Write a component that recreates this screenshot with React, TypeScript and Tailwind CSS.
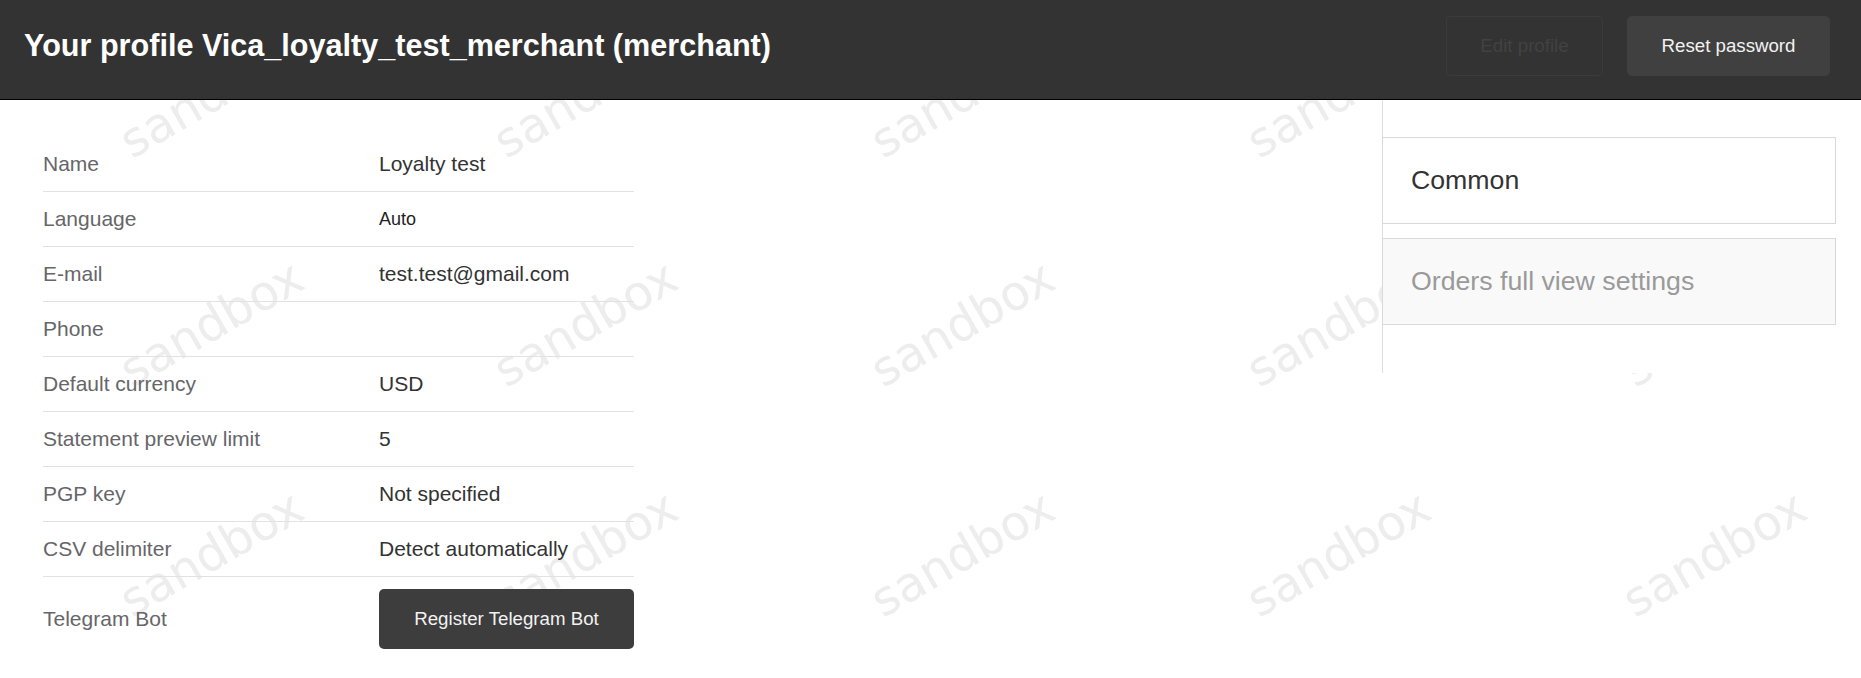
const rows: { label: string; value: string; small?: boolean }[] = [
  { label: "Name", value: "Loyalty test" },
  { label: "Language", value: "Auto", small: true },
  { label: "E-mail", value: "test.test@gmail.com" },
  { label: "Phone", value: "" },
  { label: "Default currency", value: "USD" },
  { label: "Statement preview limit", value: "5" },
  { label: "PGP key", value: "Not specified" },
  { label: "CSV delimiter", value: "Detect automatically" },
];

const markCols = [211, 585, 962, 1338, 1714];
const markRows = [94, 323, 553];

const Watermark = () => (
  <div className="pointer-events-none absolute inset-0 z-0 overflow-hidden">
    {markRows.map((y) =>
      markCols.map((x) => (
        <span
          key={`${x}-${y}`}
          className="absolute -translate-x-1/2 -translate-y-1/2 -rotate-30 whitespace-nowrap font-['DejaVu_Sans',sans-serif] text-[48px] leading-none text-[#ededed] select-none"
          style={{ left: x, top: y }}
        >
          sandbox
        </span>
      ))
    )}
  </div>
);

const Header = () => (
  <header className="relative z-10 flex h-[100px] items-center justify-between border-b border-black bg-[#333333] pb-[7px] pl-[24px] pr-[31px]">
    <h1 className="text-[30.6px] font-bold text-white">
      Your profile Vica_loyalty_test_merchant (merchant)
    </h1>
    <div className="flex items-center gap-[24px]">
      <button
        disabled
        className="h-[60px] w-[157px] rounded-[4px] border border-[#3b3b3b] text-[18.7px] text-[#424242]"
      >
        Edit profile
      </button>
      <button className="h-[60px] w-[203px] rounded-[5px] bg-[#404040] text-[18.7px] text-[#f2f2f2]">
        Reset password
      </button>
    </div>
  </header>
);

const ProfileTable = () => (
  <div className="w-[591px] pt-[37px]">
    {rows.map((row) => (
      <div
        key={row.label}
        className="grid h-[55px] grid-cols-[336px_255px] items-center border-b border-[#e2e2e2]"
      >
        <span className="text-[21px] text-[#666669]">{row.label}</span>
        <span
          className={
            row.small
              ? "text-[18px] text-[#222222]"
              : "text-[21px] text-[#333333]"
          }
        >
          {row.value}
        </span>
      </div>
    ))}
    <div className="grid grid-cols-[336px_255px] items-center pt-[12px] pb-[13px]">
      <span className="text-[21px] text-[#666669]">Telegram Bot</span>
      <button className="h-[60px] w-[255px] rounded-[5px] bg-[#3d3d3d] text-[18.7px] text-[#f2f2f2]">
        Register Telegram Bot
      </button>
    </div>
  </div>
);

const SettingsMenu = () => (
  <div className="flex h-[273px] w-[479px] flex-col gap-[14px] border-l border-[#dddddd] bg-white pr-[25px] pt-[37px]">
    <div className="-ml-px flex h-[87px] items-center border border-[#d9d9d9] pl-[28px] text-[26.7px] text-[#333333]">
      Common
    </div>
    <div className="-ml-px flex h-[87px] items-center border border-[#d9d9d9] bg-[#f9f9f9] pl-[28px] text-[26.7px] text-[#9a9a9a]">
      Orders full view settings
    </div>
  </div>
);

export default function App() {
  return (
    <div className="relative h-[678px] w-full overflow-hidden bg-white font-['Liberation_Sans',Arial,sans-serif]">
      <Watermark />
      <Header />
      <main className="relative z-10 flex items-start justify-between pl-[43px]">
        <ProfileTable />
        <SettingsMenu />
      </main>
    </div>
  );
}
